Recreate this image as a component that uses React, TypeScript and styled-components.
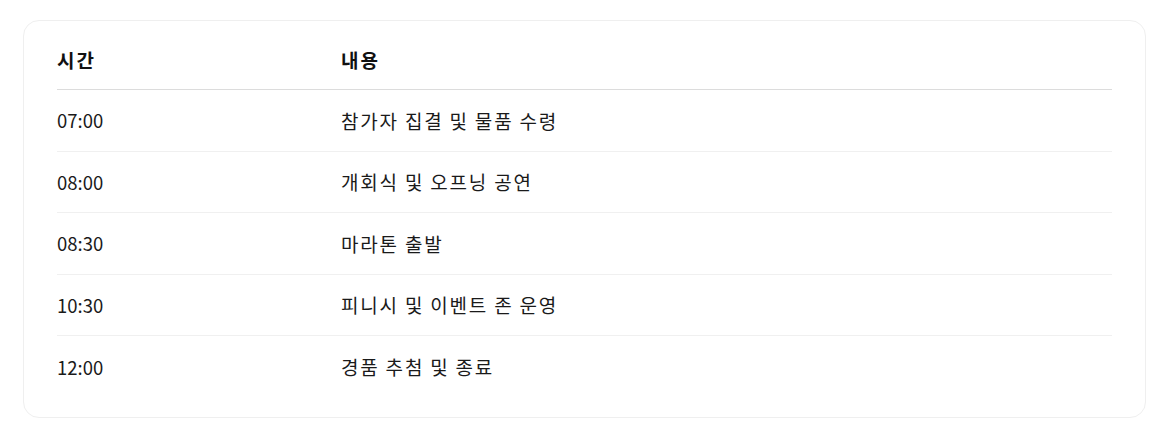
import React from "react";
import styled, { createGlobalStyle } from "styled-components";

const Global = createGlobalStyle`
  html, body { margin: 0; padding: 0; background: #ffffff; }
  body { font-family: "Noto Sans CJK KR", "Noto Sans", sans-serif; color: #111111; }
`;

const Page = styled.div`
  padding: 20px 22px 20px 23px;
`;

const Card = styled.div`
  border: 1px solid #efefef;
  border-radius: 16px;
  background: #fff;
  padding: 0 33px 19px 33px;
`;

const Table = styled.div`
  display: grid;
  grid-template-columns: 284px 1fr;
`;

const HeadCell = styled.div`
  height: 69px;
  display: flex;
  align-items: center;
  padding-top: 8px;
  box-sizing: border-box;
  font-size: 19px;
  letter-spacing: 2px;
  font-weight: 700;
  color: #111;
  border-bottom: 1px solid #dcdcdc;
`;

const Cell = styled.div<{ $last?: boolean; $text?: boolean }>`
  height: 61.5px;
  display: flex;
  align-items: center;
  box-sizing: border-box;
  font-size: ${(p) => (p.$text ? "19px" : "18.5px")};
  letter-spacing: ${(p) => (p.$text ? "1.8px" : "0")};
  color: #1a1a1a;
  border-bottom: ${(p) => (p.$last ? "none" : "1px solid #f0f0f0")};
`;

const rows = [
  ["07:00", "참가자 집결 및 물품 수령"],
  ["08:00", "개회식 및 오프닝 공연"],
  ["08:30", "마라톤 출발"],
  ["10:30", "피니시 및 이벤트 존 운영"],
  ["12:00", "경품 추첨 및 종료"],
];

export default function App() {
  return (
    <>
      <Global />
      <Page>
        <Card>
          <Table>
            <HeadCell>시간</HeadCell>
            <HeadCell>내용</HeadCell>
            {rows.map(([t, c], i) => (
              <React.Fragment key={t}>
                <Cell $last={i === rows.length - 1}>{t}</Cell>
                <Cell $text $last={i === rows.length - 1}>
                  {c}
                </Cell>
              </React.Fragment>
            ))}
          </Table>
        </Card>
      </Page>
    </>
  );
}
